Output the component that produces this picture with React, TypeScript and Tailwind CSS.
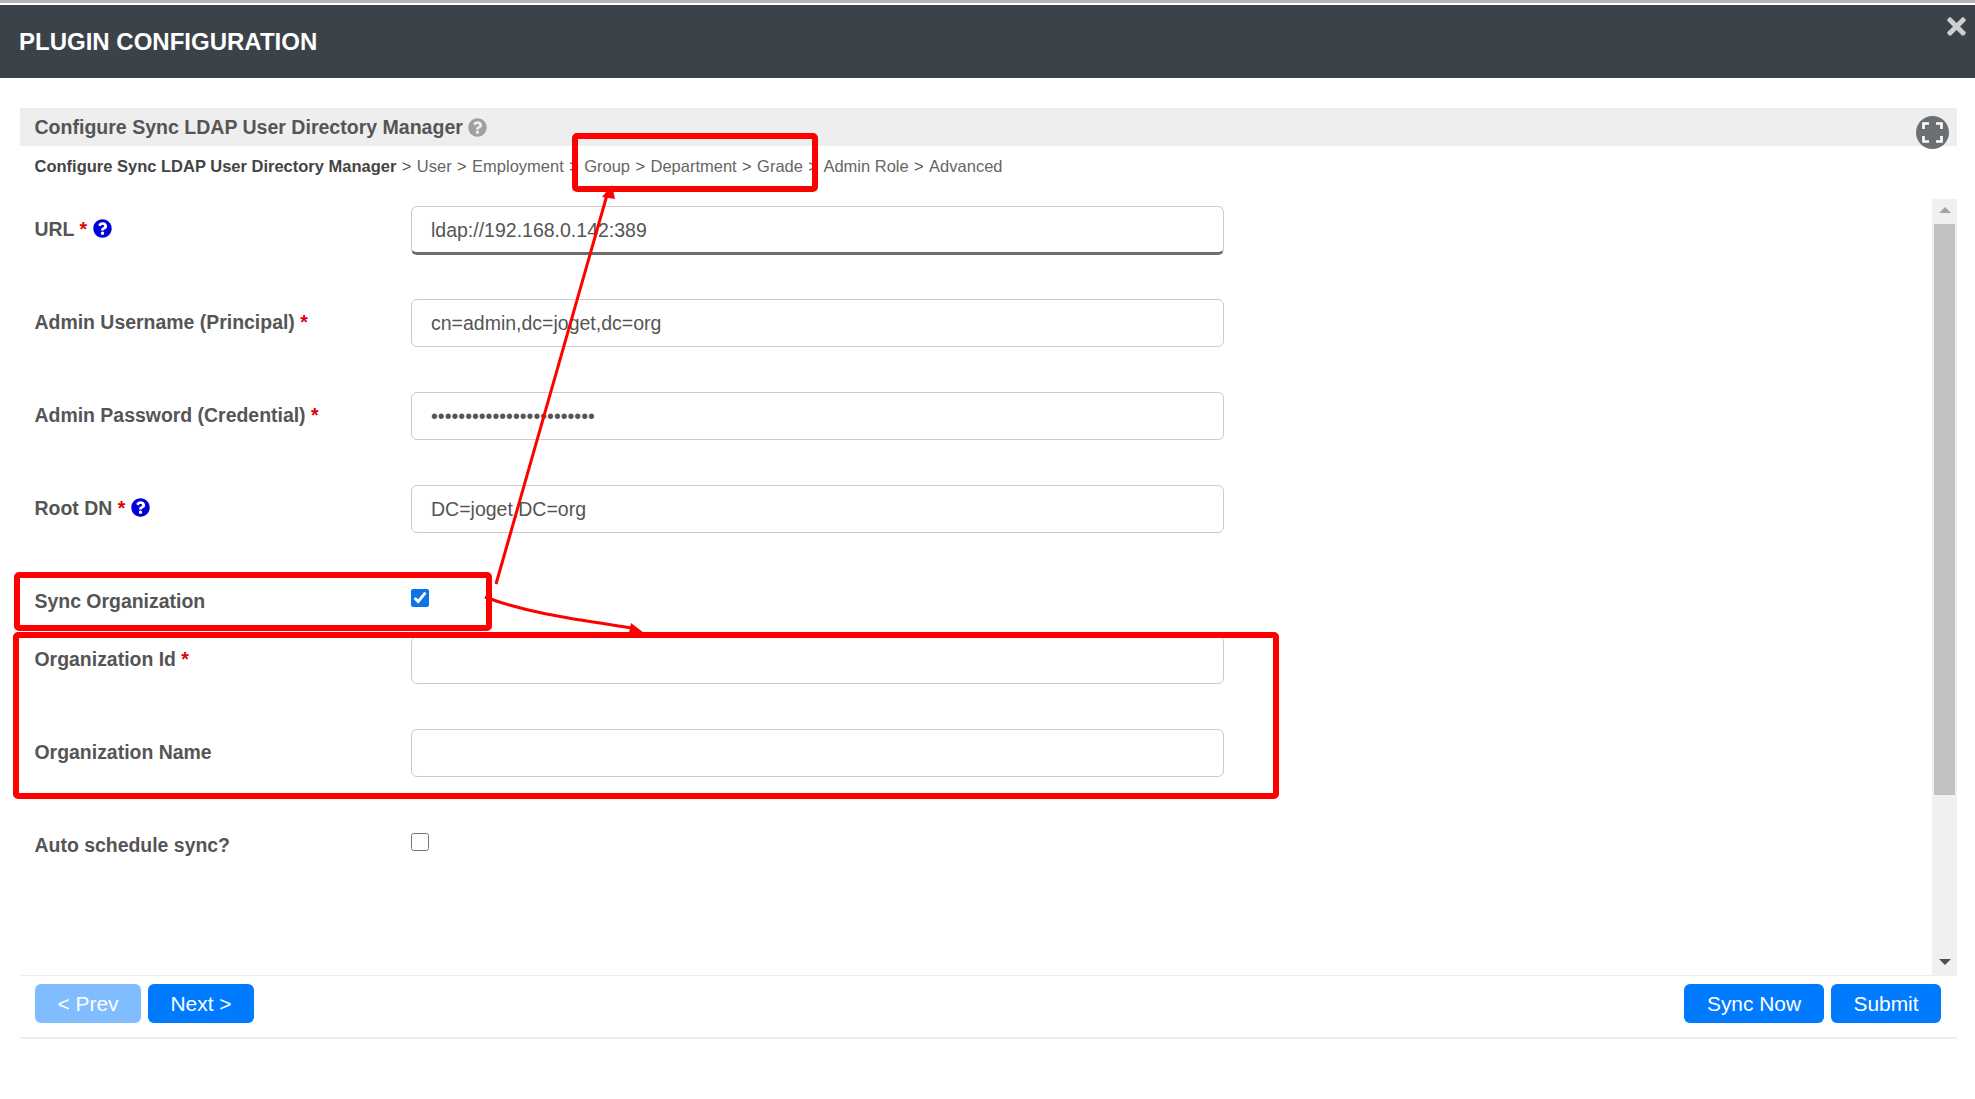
import { FaQuestionCircle, FaTimes } from "react-icons/fa";

const FONT = "font-['Liberation_Sans',Arial,sans-serif]";

const crumbs = ["User", "Employment", "Group", "Department", "Grade", "Admin Role", "Advanced"];

function Req() {
    return <span className="text-[#e00000]"> *</span>;
}

function Help() {
    return <FaQuestionCircle className="ml-[6px] inline-block align-[-2px] text-[19px] text-[#0000d8]" />;
}

function TextRow({ label, value, required, help, type = "text", focused, rowClass = "h-[93px]" }: {
    label: string;
    value?: string;
    required?: boolean;
    help?: boolean;
    type?: string;
    focused?: boolean;
    rowClass?: string;
}) {
    return (
        <div className={`flex ${rowClass}`}>
            <label className="w-[376.5px] pt-[10px] text-[19.45px] leading-[27px] font-bold text-[#555]">
                {label}
                {required && <Req />}
                {help && <Help />}
            </label>
            <input
                type={type}
                value={value ?? ""}
                readOnly
                className={
                    focused
                        ? "h-[49px] w-[813px] rounded-[6px] border border-[#ccc] border-b-[3px] border-b-[#6e6e6e] bg-white px-[19px] pt-[2px] text-[19.5px] text-[#555] outline-none"
                        : "h-[48px] w-[813px] rounded-[6px] border border-[#ccc] bg-white px-[19px] text-[19.5px] text-[#555] outline-none"
                }
            />
        </div>
    );
}

function CheckRow({ label, checked, rowClass }: { label: string; checked?: boolean; rowClass: string }) {
    return (
        <div className={`flex ${rowClass}`}>
            <label className="w-[376.5px] pt-[9px] text-[19.45px] leading-[28px] font-bold text-[#555]">
                {label}
            </label>
            <input
                type="checkbox"
                checked={!!checked}
                readOnly
                className="m-0 mt-[11px] h-[18px] w-[18px] accent-[#0b74e8]"
            />
        </div>
    );
}

function BlueButton({ children, faded, width }: { children: string; faded?: boolean; width: string }) {
    return (
        <button
            className={`h-[39px] ${width} rounded-[6px] text-[20.9px] text-white ${faded ? "bg-[#80bdff]" : "bg-[#007bff]"}`}
        >
            {children}
        </button>
    );
}

function Annotations() {
    return (
        <svg className="pointer-events-none absolute top-0 left-0" width="1975" height="1099" fill="none">
            <rect x="575" y="136" width="240" height="53" rx="2" stroke="#ff0000" strokeWidth="6" />
            <rect x="17" y="575" width="472" height="53" rx="2" stroke="#ff0000" strokeWidth="6" />
            <rect x="16" y="635" width="1260" height="161" rx="2" stroke="#ff0000" strokeWidth="6" />
            <path d="M496 584 L607 195" stroke="#ff0000" strokeWidth="3" />
            <path d="M612 185 L615 199 L602 197 Z" fill="#ff0000" />
            <path d="M485 597 C 530 614, 580 620, 632 628" stroke="#ff0000" strokeWidth="3" />
            <path d="M644 633 L629 633 L631 623 Z" fill="#ff0000" />
        </svg>
    );
}

export default function App() {
    return (
        <div className={`relative h-[1099px] w-full overflow-hidden bg-white ${FONT}`}>
            <div className="h-[3px] bg-[#b4b4b4]" />
            <div className="mt-[2px] flex h-[73px] items-start justify-between bg-[#3b4249] pr-[5px] pl-[19px]">
                <h1 className="mt-[22px] text-[24px] leading-[30px] font-bold text-white">PLUGIN CONFIGURATION</h1>
                <FaTimes className="mt-[8px] text-[27px] text-[#d0d0d0]" />
            </div>

            <div className="mt-[30px] mr-[18px] ml-[20px]">
                <div className="relative flex h-[38px] items-center bg-[#eeeeee] pt-[1px] pl-[14.5px] text-[19.55px] font-bold text-[#555]">
                    Configure Sync LDAP User Directory Manager
                    <FaQuestionCircle className="ml-[5px] text-[19px] text-[#a0a0a0]" />
                    <div className="absolute top-[8px] right-[8px] flex h-[33px] w-[33px] items-center justify-center rounded-full bg-[#6b6e72]">
                        <svg width="21" height="21" viewBox="0 0 21 21" fill="none" stroke="#fff" strokeWidth="2.6">
                            <path d="M1.5 7V1.5H7M14 1.5H19.5V7M19.5 14V19.5H14M7 19.5H1.5V14" />
                        </svg>
                    </div>
                </div>

                <div className="flex h-[53px] items-start pt-[8px] pl-[14.5px] text-[16.5px] leading-[24px] text-[#666]">
                    <span className="font-bold text-[#444]">Configure Sync LDAP User Directory Manager</span>
                    {crumbs.map((c) => (
                        <span key={c}>
                            <span className="mx-[5.4px] text-[#555]">&gt;</span>
                            {c}
                        </span>
                    ))}
                </div>

                <div className="flex h-[776px]">
                    <div className="flex-1 pt-[7px] pl-[14.5px]">
                        <TextRow label="URL" required help value="ldap://192.168.0.142:389" focused />
                        <TextRow label="Admin Username (Principal)" required value="cn=admin,dc=joget,dc=org" />
                        <TextRow label="Admin Password (Credential)" required type="password" value="........................" />
                        <TextRow label="Root DN" required help value="DC=joget,DC=org" />
                        <CheckRow label="Sync Organization" checked rowClass="h-[58px]" />
                        <TextRow label="Organization Id" required />
                        <TextRow label="Organization Name" />
                        <CheckRow label="Auto schedule sync?" rowClass="h-[100px]" />
                    </div>
                    <div className="flex w-[25px] flex-col items-center bg-[#f0f0f0]">
                        <svg className="mt-[8px]" width="12" height="6" viewBox="0 0 12 6">
                            <path d="M0 6L6 0L12 6Z" fill="#a3a3a3" />
                        </svg>
                        <div className="mt-[11px] h-[571px] w-[21px] bg-[#c1c1c1]" />
                        <svg className="mt-[164px]" width="12" height="6" viewBox="0 0 12 6">
                            <path d="M0 0L6 6L12 0Z" fill="#505050" />
                        </svg>
                    </div>
                </div>

                <div className="flex h-[64px] items-start justify-between border-t border-b-2 border-t-[#eeeeee] border-b-[#eeeeee] pt-[8px] pr-[16px] pl-[15px]">
                    <div className="flex gap-[7px]">
                        <BlueButton faded width="w-[106px]">&lt; Prev</BlueButton>
                        <BlueButton width="w-[106px]">Next &gt;</BlueButton>
                    </div>
                    <div className="flex gap-[7px]">
                        <BlueButton width="w-[140px]">Sync Now</BlueButton>
                        <BlueButton width="w-[110px]">Submit</BlueButton>
                    </div>
                </div>
            </div>

            <Annotations />
        </div>
    );
}
